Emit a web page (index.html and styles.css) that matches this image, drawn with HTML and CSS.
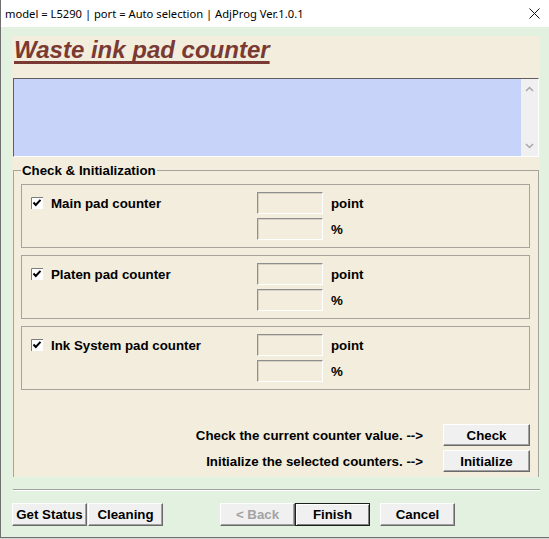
FILE: index.html
```html
<!DOCTYPE html>
<html lang="en">
  <head>
    <meta charset="UTF-8" />
    <title>Waste ink pad counter</title>
    <link rel="stylesheet" href="styles.css">
  </head>
  <body>
    <div class="window">
      <div class="titlebar">
        <span class="caption">model = L5290 | port = Auto selection | AdjProg Ver.1.0.1</span>
        <svg class="close" width="11" height="11" viewBox="0 0 11 11"><path d="M0.5 0.5L10.5 10.5M10.5 0.5L0.5 10.5" stroke="#111" stroke-width="1"/></svg>
      </div>
      <div class="client">
        <div class="panel">
          <h1 class="heading">Waste ink pad counter</h1>
          <!-- 로그 출력창 -->
          <div class="log">
            <div class="scroll">
              <svg width="9" height="6" viewBox="0 0 9 6"><path d="M1 5L4.5 1.5L8 5" fill="none" stroke="#a8a8a8" stroke-width="1.5"/></svg>
              <svg width="9" height="6" viewBox="0 0 9 6"><path d="M1 1L4.5 4.5L8 1" fill="none" stroke="#a8a8a8" stroke-width="1.5"/></svg>
            </div>
          </div>
          <!-- 카운터 확인 / 초기화 -->
          <fieldset class="group">
            <legend>Check &amp; Initialization</legend>
            <div class="pad">
              <label class="check-item">
                <svg class="checkbox" width="12" height="12" viewBox="0 0 12 12"><rect x="0" y="0" width="12" height="12" fill="#fff"/><path d="M0.5 12V0.5H12" fill="none" stroke="#7c7c7c"/><path d="M2.5 5.5L4.8 8L9.5 2.8" fill="none" stroke="#000" stroke-width="2"/></svg>
                Main pad counter
              </label>
              <input class="field" type="text" value="">
              <span class="unit">point</span>
              <input class="field row2" type="text" value="">
              <span class="unit">%</span>
            </div>
            <div class="pad">
              <label class="check-item">
                <svg class="checkbox" width="12" height="12" viewBox="0 0 12 12"><rect x="0" y="0" width="12" height="12" fill="#fff"/><path d="M0.5 12V0.5H12" fill="none" stroke="#7c7c7c"/><path d="M2.5 5.5L4.8 8L9.5 2.8" fill="none" stroke="#000" stroke-width="2"/></svg>
                Platen pad counter
              </label>
              <input class="field" type="text" value="">
              <span class="unit">point</span>
              <input class="field row2" type="text" value="">
              <span class="unit">%</span>
            </div>
            <div class="pad">
              <label class="check-item">
                <svg class="checkbox" width="12" height="12" viewBox="0 0 12 12"><rect x="0" y="0" width="12" height="12" fill="#fff"/><path d="M0.5 12V0.5H12" fill="none" stroke="#7c7c7c"/><path d="M2.5 5.5L4.8 8L9.5 2.8" fill="none" stroke="#000" stroke-width="2"/></svg>
                Ink System pad counter
              </label>
              <input class="field" type="text" value="">
              <span class="unit">point</span>
              <input class="field row2" type="text" value="">
              <span class="unit">%</span>
            </div>
            <div class="actions">
              <div class="action">
                <span class="hint">Check the current counter value. --&gt;</span>
                <button class="btn wide">Check</button>
              </div>
              <div class="action">
                <span class="hint">Initialize the selected counters. --&gt;</span>
                <button class="btn wide">Initialize</button>
              </div>
            </div>
          </fieldset>
        </div>
        <div class="separator"></div>
        <!-- 하단 버튼 -->
        <div class="footer">
          <button class="btn">Get Status</button>
          <button class="btn cleaning">Cleaning</button>
          <button class="btn back" disabled>&lt; Back</button>
          <button class="btn default">Finish</button>
          <button class="btn cancel">Cancel</button>
        </div>
      </div>
    </div>
  </body>
</html>
```

FILE: styles.css
```css
*{
  box-sizing: border-box;
}
body{
  margin: 0;
  background-color: #d4d4d4;
  font-family: "Liberation Sans", Arial, sans-serif;
  font-size: 13.3px;
  font-weight: bold;
  color: #000;
}
/* 창 전체 틀 */
.window{
  width: 549px;
  height: 538px;
  background-color: #e3f1e1;
  border-left: 1px solid #707070;
  border-bottom: 1px solid #707070;
}
.titlebar{
  height: 27px;
  background-color: #fff;
  display: flex;
  align-items: center;
  justify-content: space-between;
  padding: 0 9px 0 4px;
}
.caption{
  font-family: "Noto Sans", sans-serif;
  font-weight: normal;
  font-size: 11.2px;
}
.client{
  padding: 9px 0 0 11px;
}
/* 크림색 패널 */
.panel{
  width: 528px;
  background-color: #f3eddd;
}
.heading{
  margin: 0;
  height: 42px;
  padding-left: 2px;
  font-size: 24px;
  line-height: 28px;
  font-style: italic;
  color: #7a3a33;
  text-decoration: underline;
  text-decoration-thickness: 3px;
  text-underline-offset: 3px;
  text-decoration-skip-ink: none;
}
.log{
  margin: 0 1px;
  height: 79px;
  background-color: #c8d3fa;
  border: 1px solid;
  border-color: #5f5f5f #fff #fff #5f5f5f;
  display: flex;
  justify-content: flex-end;
}
.scroll{
  width: 17px;
  background-color: #f0f0f0;
  display: flex;
  flex-direction: column;
  justify-content: space-between;
  align-items: center;
  padding: 7px 0;
}
.scroll svg{
  display: block;
}
/* 그룹 박스 */
.group{
  margin: 7px 1px 0;
  padding: 7px 8px 5px 7px;
  border: 1px solid #a5a39b;
  border-bottom: none;
  min-width: 0;
}
.group legend{
  padding: 0 1px;
  line-height: 13px;
}
.pad{
  height: 64px;
  border: 1px solid #a5a39b;
  display: grid;
  grid-template-columns: 226px 66px auto;
  grid-template-rows: 22px 22px;
  row-gap: 4px;
  align-items: center;
  padding: 7px 0 0 9px;
}
.pad + .pad{
  margin-top: 7px;
}
.check-item{
  display: flex;
  align-items: center;
  gap: 8px;
}
.checkbox{
  display: block;
}
.field{
  width: 66px;
  height: 22px;
  margin: 0;
  padding: 0;
  background-color: #f3eddd;
  border: 1px solid;
  border-color: #8f8f8f #fff #fff #8f8f8f;
  box-shadow: inset 1px 1px #d5d0c2;
}
.field.row2{
  grid-column: 2;
}
.unit{
  padding-left: 8px;
}
.actions{
  margin-top: 34px;
  display: flex;
  flex-direction: column;
  gap: 4px;
}
.action{
  display: flex;
  justify-content: flex-end;
  align-items: center;
}
.hint{
  margin-right: 20px;
}
/* 버튼 */
.btn{
  font: inherit;
  color: #000;
  width: 75px;
  height: 23px;
  padding: 0;
  background-color: #f0f0f0;
  border: 1px solid;
  border-color: #fff #696969 #696969 #fff;
  box-shadow: inset -1px -1px #a0a0a0;
}
.btn.wide{
  width: 87px;
  height: 22px;
}
.btn.default{
  border-color: #1e1e1e;
  box-shadow: inset 1px 1px #fff, inset -1px -1px #808080;
}
.btn.back{
  color: #a3a3a3;
  margin-left: 57px;
}
.btn.cleaning{
  margin-left: 1px;
}
.btn.cancel{
  margin-left: 10px;
}
.separator{
  margin: 12px 0 0 1px;
  width: 527px;
  border-top: 1px solid #a0a0a0;
  border-bottom: 1px solid #fff;
}
.footer{
  margin-top: 12px;
  display: flex;
}
```
